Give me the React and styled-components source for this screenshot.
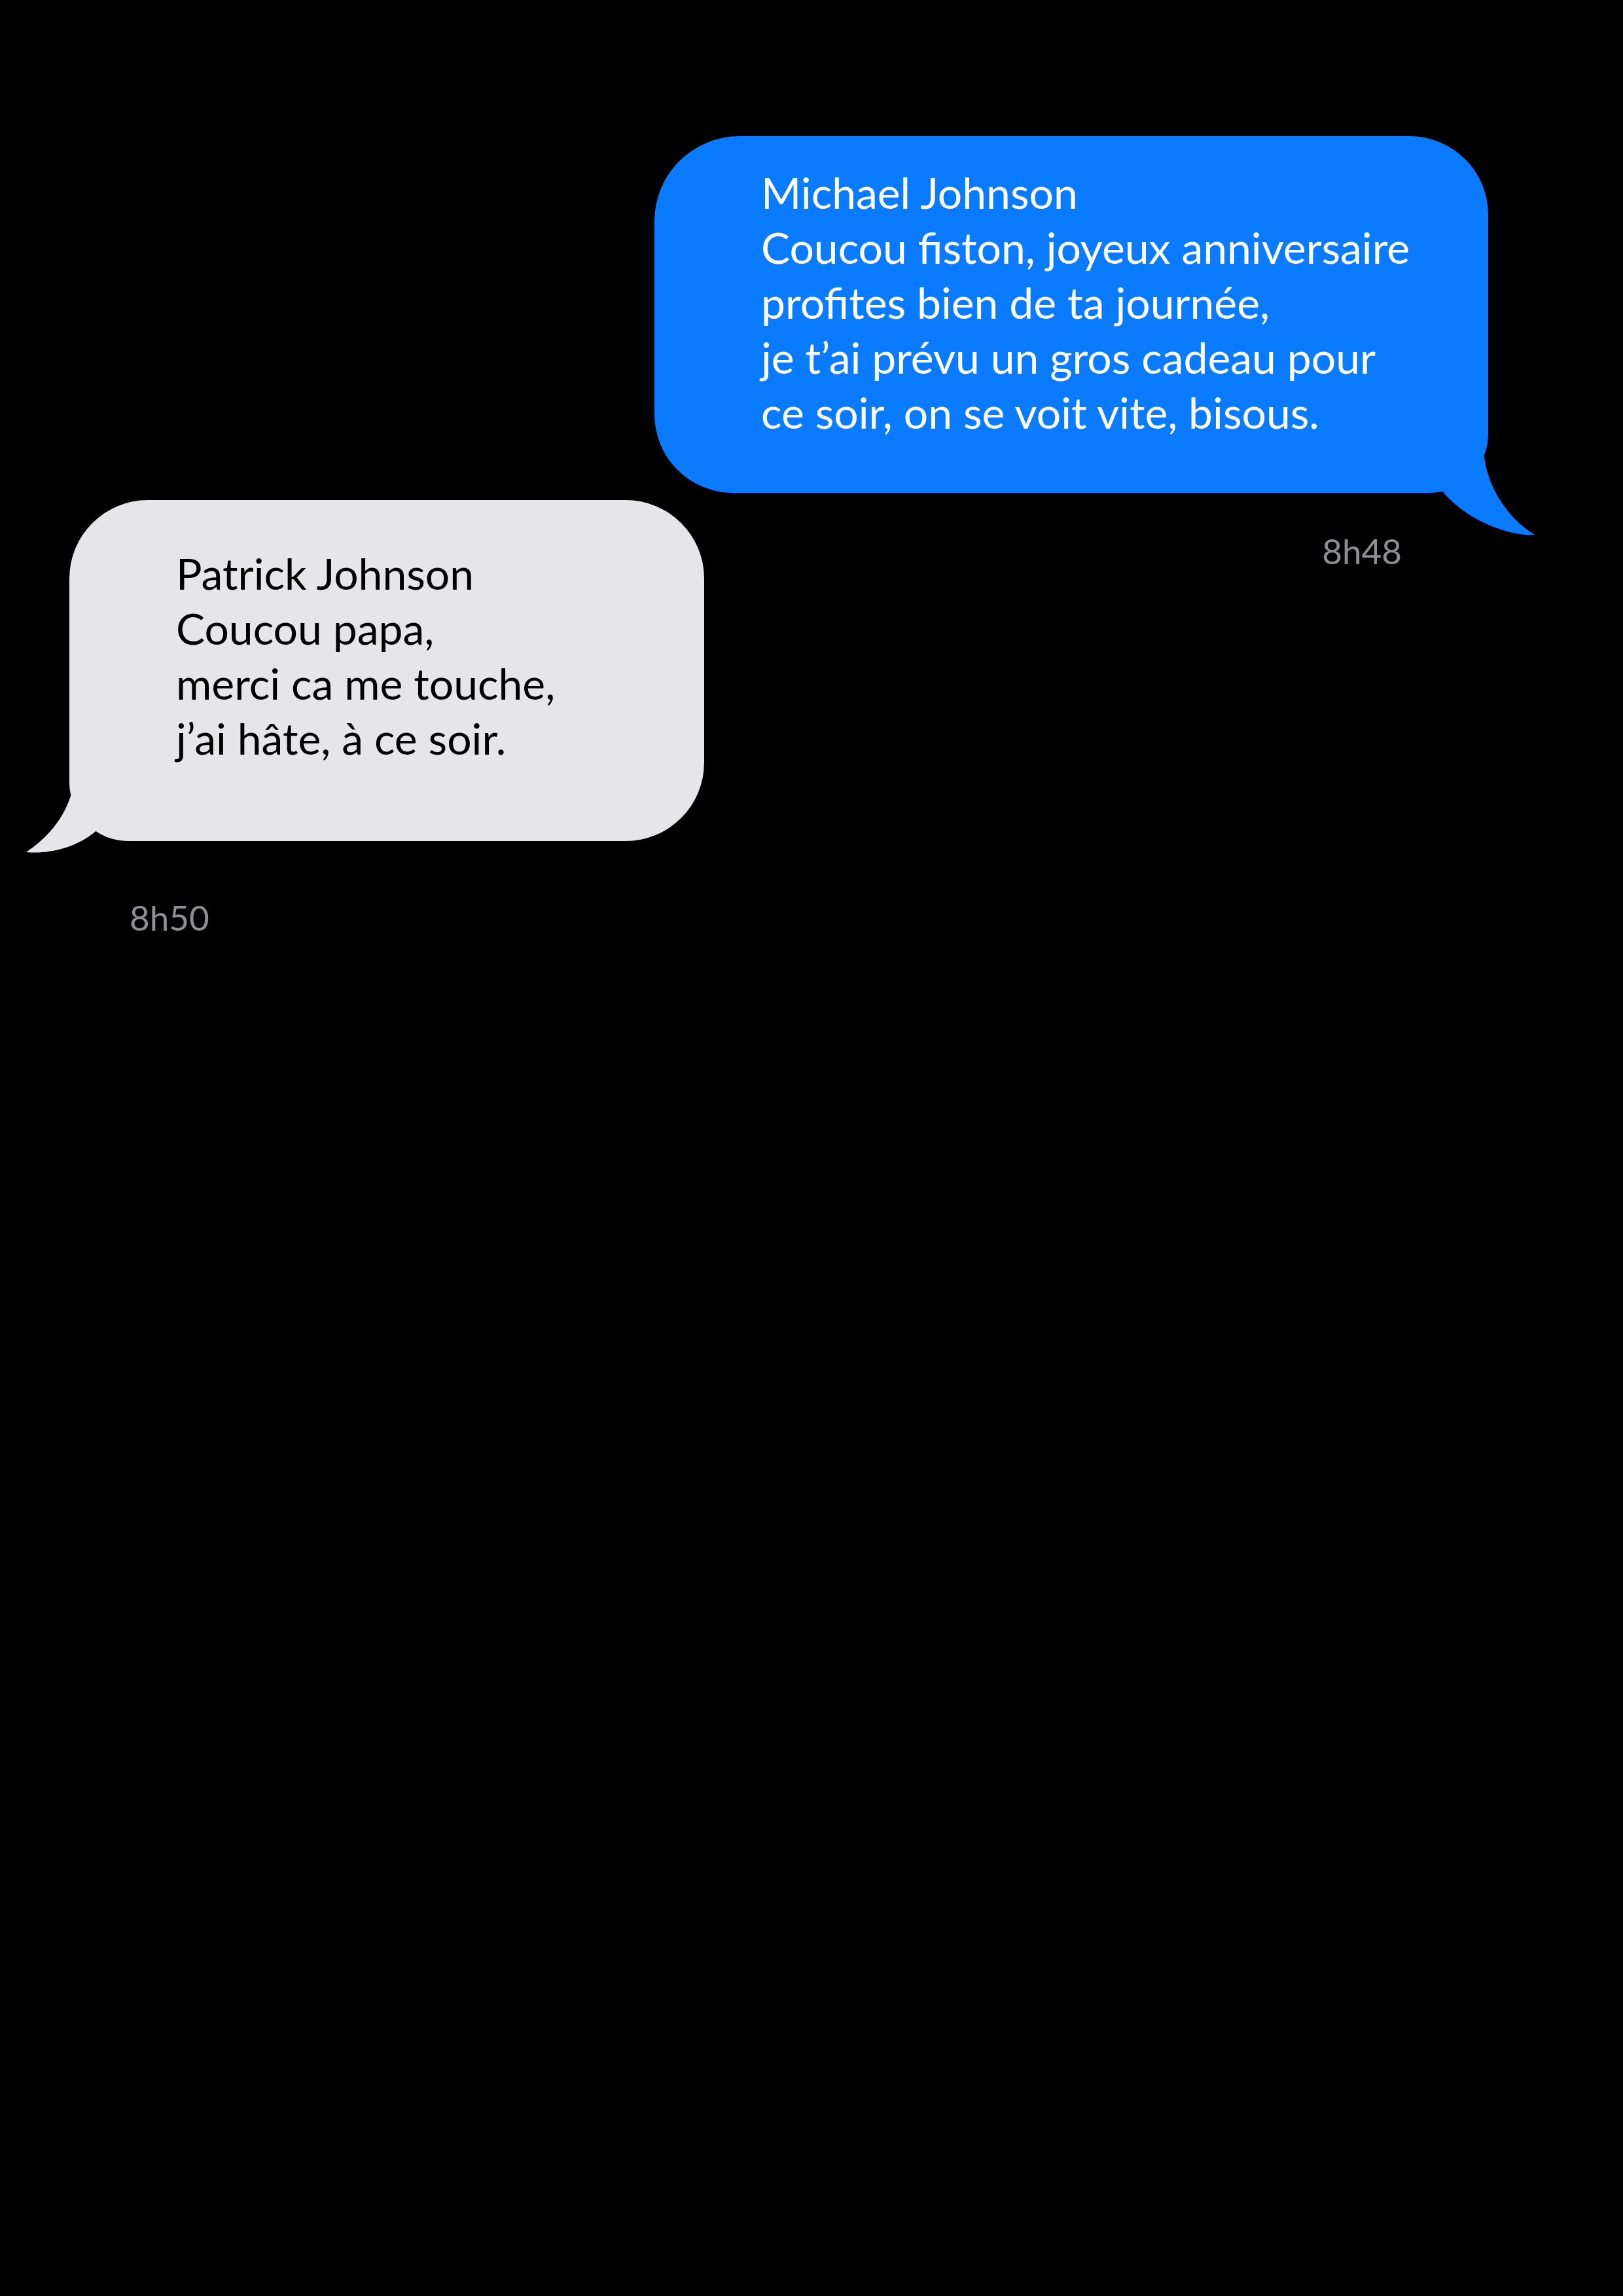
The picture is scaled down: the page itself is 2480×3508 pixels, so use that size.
import styled, { createGlobalStyle } from 'styled-components'

const GlobalStyle = createGlobalStyle`
    html, body {
        margin: 0;
        padding: 0;
        background: #000;
    }
    body {
        font-family: 'Lato', 'Open Sans', sans-serif;
    }
`;

const Screen = styled.div`
    width: 2480px;
    min-height: 3508px;
    box-sizing: border-box;
    padding-top: 208px;
    background: #000;
    display: flex;
    flex-flow: column nowrap;
`;

const Message = styled.div`
    display: flex;
    flex-flow: column nowrap;
    align-self: ${p => (p.$mine ? 'flex-end' : 'flex-start')};
    margin-right: ${p => (p.$mine ? '206px' : '0')};
    margin-left: ${p => (p.$mine ? '0' : '106px')};
    margin-top: ${p => p.$offset || 0}px;
`;

const Bubble = styled.div`
    position: relative;
    box-sizing: border-box;
    width: ${p => p.$width}px;
    height: ${p => p.$height}px;
    padding: ${p => p.$padTop}px 60px 0 163px;
    background: ${p => (p.$mine ? '#0a7bff' : '#e6e5ea')};
    color: ${p => (p.$mine ? '#ffffff' : '#000000')};
    border-radius: ${p => (p.$mine ? '130px 120px 90px 120px' : '120px 120px 120px 90px')};
    font-size: 66px;
    line-height: 84px;
`;

const Line = styled.div`
    white-space: nowrap;
`;

const Tail = styled.svg`
    position: absolute;
    display: block;
    ${p => (p.$mine
        ? 'right: -72px; bottom: -65px;'
        : 'left: -68px; bottom: -18px;')}
`;

const Time = styled.div`
    margin-top: ${p => p.$gap}px;
    font-size: 53px;
    line-height: 53px;
    color: #8e8e93;
    text-align: ${p => (p.$mine ? 'right' : 'left')};
    padding-right: ${p => (p.$mine ? '132px' : '0')};
    padding-left: ${p => (p.$mine ? '0' : '92px')};
`;

const BlueTail = () => (
    <Tail $mine width="176" height="178" viewBox="0 0 176 178">
        <path
            fill="#0a7bff"
            d="M104,0 L104,10 C103,25 97,34 97,42 C97,95 130,150 175,177 C145,180 70,160 29,104 C22,110 12,112 0,113 L0,0 Z"
        />
    </Tail>
);

const GreyTail = () => (
    <Tail width="162" height="123" viewBox="0 0 162 123">
        <path
            fill="#e6e5ea"
            d="M68,0 L68,10 C70,20 71,28 71,33 C60,70 35,100 2,122 C40,125 80,115 112,87 C125,97 140,103 160,105 L162,105 L162,0 Z"
        />
    </Tail>
);

export default () => (
    <>
        <GlobalStyle />
        <Screen>
            <Message $mine>
                <Bubble $mine $width={1274} $height={545} $padTop={44}>
                    <Line>Michael Johnson</Line>
                    <Line>Coucou fiston, joyeux anniversaire</Line>
                    <Line>profites bien de ta journée,</Line>
                    <Line>je t’ai prévu un gros cadeau pour</Line>
                    <Line>ce soir, on se voit vite, bisous.</Line>
                    <BlueTail />
                </Bubble>
                <Time $mine $gap={62}>8h48</Time>
            </Message>
            <Message $offset={-104}>
                <Bubble $width={970} $height={521} $padTop={70}>
                    <Line>Patrick Johnson</Line>
                    <Line>Coucou papa,</Line>
                    <Line>merci ca me touche,</Line>
                    <Line>j’ai hâte, à ce soir.</Line>
                    <GreyTail />
                </Bubble>
                <Time $gap={90}>8h50</Time>
            </Message>
        </Screen>
    </>
)
